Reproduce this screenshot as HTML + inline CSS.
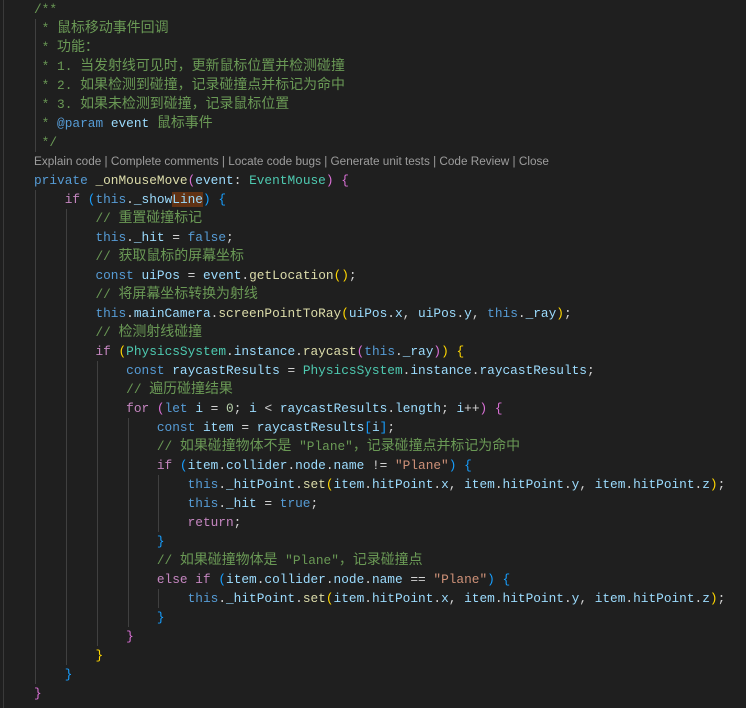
<!DOCTYPE html>
<html><head><meta charset="utf-8"><style>
html,body{margin:0;padding:0;background:#1f1f1f;width:746px;height:708px;overflow:hidden}
pre{position:absolute;left:34px;top:0;margin:0;font-family:"Liberation Mono",monospace;font-size:12.8px;line-height:19px;color:#d4d4d4;white-space:pre}
.k{color:#569cd6}.c{color:#c586c0}.f{color:#dcdcaa}.v{color:#9cdcfe}.t{color:#4ec9b0}.m{color:#6a9955}.s{color:#ce9178}.n{color:#b5cea8}
.p1{color:#ffd700}.p2{color:#da70d6}.p3{color:#179fff}
.z{font-family:"Noto Sans CJK SC",sans-serif;font-size:13.95px;line-height:0}
.lens{font-family:"Liberation Sans",sans-serif;font-size:11.75px;color:#9d9d9d;line-height:0}
.hl{background:#613214}
.g{position:absolute;width:1px;background:#404040}
</style></head><body>
<div class="g" style="left:3px;top:0;height:708px;background:#3a3a3a"></div>
<div class="g" style="left:35px;top:19px;height:133px"></div>
<div class="g" style="left:35px;top:190px;height:494px"></div>
<div class="g" style="left:66px;top:209px;height:456px"></div>
<div class="g" style="left:97px;top:361px;height:285px"></div>
<div class="g" style="left:128px;top:418px;height:209px"></div>
<div class="g" style="left:158px;top:475px;height:57px"></div>
<div class="g" style="left:158px;top:589px;height:19px"></div>
<pre><span class="m">/**</span>
<span class="m"> * <span class="z">鼠标移动事件回调</span></span>
<span class="m"> * <span class="z">功能：</span></span>
<span class="m"> * 1. <span class="z">当发射线可见时，更新鼠标位置并检测碰撞</span></span>
<span class="m"> * 2. <span class="z">如果检测到碰撞，记录碰撞点并标记为命中</span></span>
<span class="m"> * 3. <span class="z">如果未检测到碰撞，记录鼠标位置</span></span>
<span class="m"> * </span><span class="k">@param</span> <span class="v">event</span> <span class="m z">鼠标事件</span>
<span class="m"> */</span>
<span class="lens">Explain code | Complete comments | Locate code bugs | Generate unit tests | Code Review | Close</span>
<span class="k">private</span> <span class="f">_onMouseMove</span><span class="p2">(</span><span class="v">event</span>: <span class="t">EventMouse</span><span class="p2">)</span> <span class="p2">{</span>
    <span class="c">if</span> <span class="p3">(</span><span class="k">this</span>.<span class="v">_show<span class="hl">Line</span></span><span class="p3">)</span> <span class="p3">{</span>
        <span class="m">// <span class="z">重置碰撞标记</span></span>
        <span class="k">this</span>.<span class="v">_hit</span> = <span class="k">false</span>;
        <span class="m">// <span class="z">获取鼠标的屏幕坐标</span></span>
        <span class="k">const</span> <span class="v">uiPos</span> = <span class="v">event</span>.<span class="f">getLocation</span><span class="p1">()</span>;
        <span class="m">// <span class="z">将屏幕坐标转换为射线</span></span>
        <span class="k">this</span>.<span class="v">mainCamera</span>.<span class="f">screenPointToRay</span><span class="p1">(</span><span class="v">uiPos</span>.<span class="v">x</span>, <span class="v">uiPos</span>.<span class="v">y</span>, <span class="k">this</span>.<span class="v">_ray</span><span class="p1">)</span>;
        <span class="m">// <span class="z">检测射线碰撞</span></span>
        <span class="c">if</span> <span class="p1">(</span><span class="t">PhysicsSystem</span>.<span class="v">instance</span>.<span class="f">raycast</span><span class="p2">(</span><span class="k">this</span>.<span class="v">_ray</span><span class="p2">)</span><span class="p1">)</span> <span class="p1">{</span>
            <span class="k">const</span> <span class="v">raycastResults</span> = <span class="t">PhysicsSystem</span>.<span class="v">instance</span>.<span class="v">raycastResults</span>;
            <span class="m">// <span class="z">遍历碰撞结果</span></span>
            <span class="c">for</span> <span class="p2">(</span><span class="k">let</span> <span class="v">i</span> = <span class="n">0</span>; <span class="v">i</span> &lt; <span class="v">raycastResults</span>.<span class="v">length</span>; <span class="v">i</span>++<span class="p2">)</span> <span class="p2">{</span>
                <span class="k">const</span> <span class="v">item</span> = <span class="v">raycastResults</span><span class="p3">[</span><span class="v">i</span><span class="p3">]</span>;
                <span class="m">// <span class="z">如果碰撞物体不是</span> "Plane"<span class="z">，记录碰撞点并标记为命中</span></span>
                <span class="c">if</span> <span class="p3">(</span><span class="v">item</span>.<span class="v">collider</span>.<span class="v">node</span>.<span class="v">name</span> != <span class="s">"Plane"</span><span class="p3">)</span> <span class="p3">{</span>
                    <span class="k">this</span>.<span class="v">_hitPoint</span>.<span class="f">set</span><span class="p1">(</span><span class="v">item</span>.<span class="v">hitPoint</span>.<span class="v">x</span>, <span class="v">item</span>.<span class="v">hitPoint</span>.<span class="v">y</span>, <span class="v">item</span>.<span class="v">hitPoint</span>.<span class="v">z</span><span class="p1">)</span>;
                    <span class="k">this</span>.<span class="v">_hit</span> = <span class="k">true</span>;
                    <span class="c">return</span>;
                <span class="p3">}</span>
                <span class="m">// <span class="z">如果碰撞物体是</span> "Plane"<span class="z">，记录碰撞点</span></span>
                <span class="c">else</span> <span class="c">if</span> <span class="p3">(</span><span class="v">item</span>.<span class="v">collider</span>.<span class="v">node</span>.<span class="v">name</span> == <span class="s">"Plane"</span><span class="p3">)</span> <span class="p3">{</span>
                    <span class="k">this</span>.<span class="v">_hitPoint</span>.<span class="f">set</span><span class="p1">(</span><span class="v">item</span>.<span class="v">hitPoint</span>.<span class="v">x</span>, <span class="v">item</span>.<span class="v">hitPoint</span>.<span class="v">y</span>, <span class="v">item</span>.<span class="v">hitPoint</span>.<span class="v">z</span><span class="p1">)</span>;
                <span class="p3">}</span>
            <span class="p2">}</span>
        <span class="p1">}</span>
    <span class="p3">}</span>
<span class="p2">}</span></pre>
</body></html>
